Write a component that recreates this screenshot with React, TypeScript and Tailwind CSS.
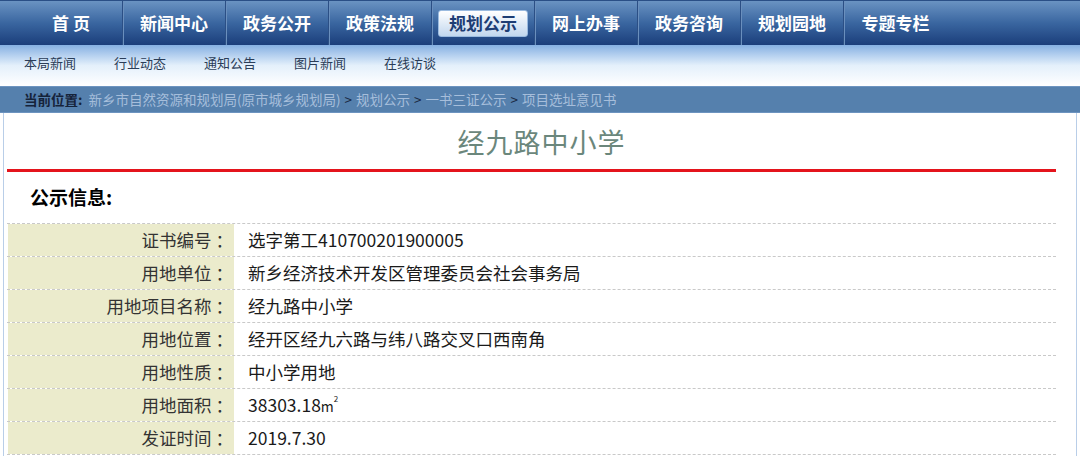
const navItems = ["首 页", "新闻中心", "政务公开", "政策法规", "规划公示", "网上办事", "政务咨询", "规划园地", "专题专栏"];
const subItems = ["本局新闻", "行业动态", "通知公告", "图片新闻", "在线访谈"];

const rows: { label: string; value: React.ReactNode }[] = [
  { label: "证书编号", value: "选字第工410700201900005" },
  { label: "用地单位", value: "新乡经济技术开发区管理委员会社会事务局" },
  { label: "用地项目名称", value: "经九路中小学" },
  { label: "用地位置", value: "经开区经九六路与纬八路交叉口西南角" },
  { label: "用地性质", value: "中小学用地" },
  {
    label: "用地面积",
    value: (
      <>
        38303.18<span className="text-[14px]">m</span>
        <span className="inline-block align-top text-[8px] leading-[8px] mt-[3px]">2</span>
      </>
    ),
  },
  { label: "发证时间", value: "2019.7.30" },
];

export default function App() {
  return (
    <div className="w-[1080px] h-[456px] overflow-hidden bg-white font-['Noto_Sans_CJK_SC',sans-serif]">
      {/* top nav */}
      <div className="h-[45px] flex pl-[20px] bg-gradient-to-b from-[#6a93c2] via-[#3a66a0] to-[#1b3e7b] border-t border-[#2a4f86]">
        {navItems.map((item, i) => {
          const active = item === "规划公示";
          return (
            <div
              key={item}
              className={`w-[103px] h-full flex items-center justify-center ${
                i < navItems.length - 1 ? "border-r border-r-[#2b4f85] shadow-[1px_0_0_#6a8fbd]" : ""
              }`}
            >
              {active ? (
                <div className="w-[90px] h-[27px] rounded-[3px] border border-[#9bbbe0] bg-gradient-to-b from-[#ffffff] to-[#c2d7ee] flex items-center justify-center text-[17px] font-bold text-[#1d3d74]">
                  {item}
                </div>
              ) : (
                <span className="text-[17px] font-bold text-white whitespace-pre">{item}</span>
              )}
            </div>
          );
        })}
      </div>

      {/* sub nav */}
      <div className="h-[41px] flex items-start pt-[10px] pl-[24px] bg-gradient-to-b from-[#86b0e2] via-[#e4f0fb] to-white">
        {subItems.map((s) => (
          <div key={s} className="w-[90px] text-[13px] leading-[16px] text-[#2b3d58]">
            {s}
          </div>
        ))}
      </div>

      {/* breadcrumb */}
      <div className="h-[27px] flex items-center pl-[24px] bg-[#5580ad] border-y border-[#6d94c0] text-[13.5px]">
        <span className="font-bold text-[#15233a]">当前位置:</span>
        <span className="ml-[6px] text-[#a6bedb]">新乡市自然资源和规划局(原市城乡规划局)</span>
        <span className="mx-[4px] text-[#1b2a44]">&gt;</span>
        <span className="text-[#a6bedb]">规划公示</span>
        <span className="mx-[4px] text-[#1b2a44]">&gt;</span>
        <span className="text-[#a6bedb]">一书三证公示</span>
        <span className="mx-[4px] text-[#1b2a44]">&gt;</span>
        <span className="text-[#a6bedb]">项目选址意见书</span>
      </div>

      {/* content */}
      <div className="mx-[3px] border-x border-[#b9cee8] h-[344px] pl-[3px]">
        <div className="h-[56px] flex items-end justify-center pb-[8px]">
          <h1 className="text-[27px] leading-[34px] tracking-[1px] text-[#6b877c] font-['Liberation_Serif','Noto_Sans_CJK_SC',serif] font-normal">
            经九路中小学
          </h1>
        </div>
        <div className="h-[3px] mr-[20px] bg-[#e4141c]" />

        <div className="h-[51px] flex items-center pl-[23px]">
          <span className="text-[19px] font-bold text-black">公示信息:</span>
        </div>

        <div className="mr-[20px] border-t border-dashed border-[#c9c9c9]">
          {rows.map((r) => (
            <div key={r.label} className="h-[33px] flex border-b border-dashed border-[#c9c9c9]">
              <div className="w-[226px] ml-[1px] bg-[#ebebcc] flex items-center justify-end pr-[1px] text-[17.5px] text-[#333]">
                <span>{r.label}</span>
                <span className="pl-[4px]">：</span>
              </div>
              <div className="flex-1 flex items-center pl-[14px] text-[17.5px] text-[#1a1a1a]">
                <span>{r.value}</span>
              </div>
            </div>
          ))}
        </div>
      </div>
    </div>
  );
}
